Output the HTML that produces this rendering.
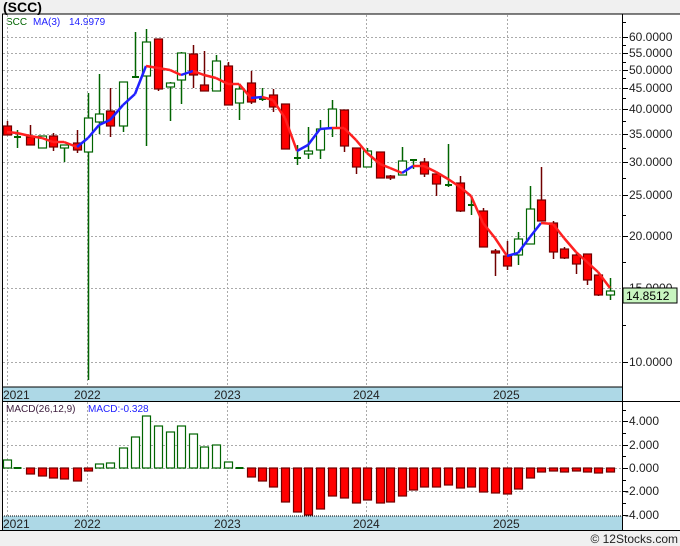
<!DOCTYPE html>
<html><head><meta charset="utf-8"><style>
html,body{margin:0;padding:0;background:#f0f0f0;width:680px;height:546px;overflow:hidden;font-family:"Liberation Sans",sans-serif}
svg{display:block}
</style></head><body>
<svg id="s" width="680" height="546" xmlns="http://www.w3.org/2000/svg" font-family="Liberation Sans, sans-serif">
<rect x="0" y="0" width="680" height="546" fill="#f0f0f0"/>
<rect x="2" y="14" width="678" height="516" fill="#fff"/>
<text x="3" y="12" font-size="14" font-weight="bold" fill="#000">(SCC)</text>
<text x="6" y="25" font-size="10" fill="#006400">SCC</text>
<text x="33" y="25" font-size="10" fill="#2020ff">MA(3)</text>
<text x="69" y="25" font-size="10" fill="#2020ff">14.9979</text>
<g id="g"></g>
<rect x="2" y="387" width="620" height="14" fill="#add8e6"/>
<rect x="2" y="516" width="620" height="14" fill="#add8e6"/>
<line x1="2" y1="14" x2="680" y2="14" stroke="#000"/>
<line x1="2" y1="387" x2="622" y2="387" stroke="#000"/>
<line x1="2" y1="401.5" x2="680" y2="401.5" stroke="#000"/>
<line x1="2" y1="516" x2="622" y2="516" stroke="#000" stroke-dasharray="1,1"/>
<line x1="0" y1="530.5" x2="680" y2="530.5" stroke="#000"/>
<line x1="2.5" y1="14" x2="2.5" y2="530" stroke="#000"/>
<line x1="622.5" y1="14" x2="622.5" y2="530" stroke="#000"/>
<g font-size="12" fill="#222">
<text x="3" y="399">2021</text><text x="74" y="399">2022</text><text x="214" y="399">2023</text><text x="353" y="399">2024</text><text x="493" y="399">2025</text>
<text x="3" y="528">2021</text><text x="74" y="528">2022</text><text x="214" y="528">2023</text><text x="353" y="528">2024</text><text x="493" y="528">2025</text>
</g>
<text x="6" y="412" font-size="10" fill="#402040">MACD(26,12,9)</text>
<text x="88" y="412" font-size="10" fill="#2020ff">MACD:-0.328</text>
<text x="678" y="543" font-size="12" fill="#222" text-anchor="end">© 12Stocks.com</text>
<rect x="623" y="288" width="54" height="15" fill="#c8f5c0" stroke="#000"/>
<text x="626" y="300" font-size="12" fill="#000">14.8512</text>
</svg>
<script>
var g=document.getElementById('g'),h='';
function L(x1,y1,x2,y2,c,w,d){h+='<line x1="'+x1+'" y1="'+y1+'" x2="'+x2+'" y2="'+y2+'" stroke="'+c+'" stroke-width="'+(w||1)+'"'+(d?' stroke-dasharray="'+d+'"':'')+'/>';}
function T(x,y,s,fs){h+='<text x="'+x+'" y="'+y+'" font-size="'+(fs||12)+'" fill="#222">'+s+'</text>';}
[37,53,70,88,109,134,162,195,236,288,362].forEach(function(y){L(3,y+.5,622,y+.5,'#aaa',1,'2,2');});
[7,87,227,366,507].forEach(function(x){L(x+.5,15,x+.5,387,'#aaa',1,'2,2');L(x+.5,402,x+.5,516,'#aaa',1,'2,2');});
[421,445,468,491].forEach(function(y){L(3,y+.5,622,y+.5,'#aaa',1,'2,2');});
var pl=[[37,'60.0000'],[53,'55.0000'],[70,'50.0000'],[88,'45.0000'],[109,'40.0000'],[134,'35.0000'],[162,'30.0000'],[195,'25.0000'],[236,'20.0000'],[288,'15.0000'],[362,'10.0000']];
pl.forEach(function(p){L(622,p[0]+.5,628,p[0]+.5,'#000');T(629,p[0]+4,p[1]);});
[22,45,62,78,98,121,148,178,215,262,325].forEach(function(y){L(622,y+.5,626,y+.5,'#000');});
[[421,'4.000'],[445,'2.000'],[468,'0.000'],[491,'-2.000'],[515,'-4.000']].forEach(function(p){L(622,p[0]+.5,628,p[0]+.5,'#000');T(p[1][0]=='-'?625:629,p[0]+4,p[1]);});
[410,433,456,480,503].forEach(function(y){L(622,y+.5,626,y+.5,'#000');});
var C=[[7,126,135,121,135,0],[17,136,137,130,148,1],[30,137,145,125,145,0],[42,136,148,136,148,1],[53,136,147,133,151,0],[64,145,148,145,162,1],[77,143,150,130,153,0],[88,118,152,93,380,1],[99,114,122,74,134,1],[110,111,126,88,137,0],[123,82,126,82,132,1],[135,76,78,32,77,1],[146,42,76,29,146,1],[158,39,89,39,91,0],[170,83,87,82,121,1],[181,53,80,52,104,1],[193,54,75,45,88,0],[204,85,91,51,91,0],[216,61,91,55,91,1],[228,66,105,62,105,0],[239,89,103,84,120,1],[251,83,102,71,104,0],[262,98,100,88,101,1],[273,95,107,89,112,0],[285,104,149,104,149,0],[297,157,159,145,165,1],[308,151,154,127,159,1],[320,129,150,120,159,1],[332,109,128,100,137,1],[344,110,146,110,152,0],[356,148,167,148,174,0],[367,151,167,148,167,1],[380,152,178,152,178,0],[390,176,178,175,180,0],[402,161,175,147,175,1],[413,159,161,159,169,1],[424,162,174,158,177,0],[436,174,184,174,196,0],[448,184,186,144,187,1],[460,183,211,176,212,0],[471,204,206,197,215,1],[483,211,247,208,247,0],[495,251,253,249,276,0],[507,256,266,241,270,0],[518,239,255,232,265,1],[530,209,244,186,244,1],[541,200,221,167,221,0],[553,223,252,221,259,0],[564,249,258,247,259,0],[576,255,264,253,274,0],[587,254,280,254,285,0],[598,275,295,275,296,0],[610,291,295,278,300,1]];
C.forEach(function(c){var col=c[5]?'#006400':'#700000';L(c[0]+.5,c[3],c[0]+.5,c[4],col,1.5);
var ht=Math.max(c[2]-c[1],1);
if(c[5]&&ht<=2){L(c[0]-3,c[1]+1,c[0]+4,c[1]+1,col,2);}else
h+='<rect x="'+(c[0]-3.5)+'" y="'+c[1]+'" width="8" height="'+ht+'" fill="'+(c[5]?'#fff':'#ff0000')+'" stroke="'+col+'" stroke-width="1.2"/>';});
var M=[132,133,136,138,142,142,147,138,125,120,105,94,66,68,70,75,71,75,78,84,84,98,97,100,118,151,145,129,128,128,140,153,164,168,173,166,166,172,179,187,196,223,238,256,253,237,223,224,238,252,262,272,288];
for(var i=1;i<M.length;i++){var c=M[i]<M[i-1]?'#2020ff':'#ff2020';L(C[i-1][0],M[i-1],C[i][0],M[i],c,2.5);}
var D=[460,468,474,476,478,479,481,471,464,463,448,437,416,426,432,426,434,447,445,462,468,477,481,487,502,512,515,509,496,498,503,500,503,502,496,490,487,487,485,488,487,492,493,494,489,478,472,471,472,471,472,473,472];
D.forEach(function(y,i){var x=C[i][0];if(Math.abs(y-468)<1){L(x-3.5,468,x+4.5,468,'#006400',2);return;}
var up=y<468;h+='<rect x="'+(x-3.5)+'" y="'+Math.min(y,468)+'" width="8" height="'+Math.abs(y-468)+'" fill="'+(up?'#fff':'#ff0000')+'" stroke="'+(up?'#006400':'#700000')+'" stroke-width="1.2"/>';});
g.innerHTML=h;
</script>
</body></html>
